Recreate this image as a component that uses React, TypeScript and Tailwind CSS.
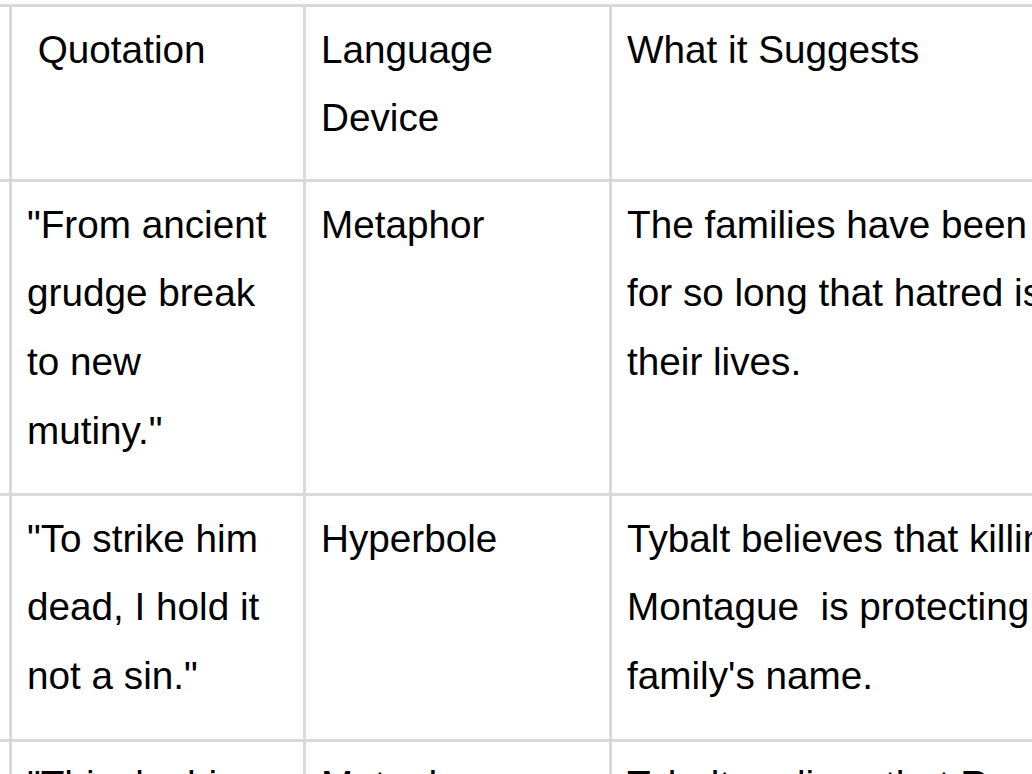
const rows: { quote: string; device: string; meaning: string[] }[] = [
  {
    quote: '"From ancient grudge break to new mutiny."',
    device: 'Metaphor',
    meaning: ['The families have been fighting', 'for so long that hatred is part of', 'their lives.'],
  },
  {
    quote: '"To strike him dead, I hold it not a sin."',
    device: 'Hyperbole',
    meaning: ['Tybalt believes that killing a', 'Montague\u00a0 is protecting his', "family's name."],
  },
  {
    quote: '"This, by his voice, should be a Montague."',
    device: 'Metaphor',
    meaning: ['Tybalt realises that Romeo is', 'at the party.'],
  },
]

function Cell({ children, className = '' }: { children?: React.ReactNode; className?: string }) {
  return <div className={`bg-white pt-[8.5px] pl-[15px] ${className}`}>{children}</div>
}

export default function App() {
  return (
    <div
      className="w-[1032px] h-[774px] overflow-hidden bg-white text-black text-[38.7px] leading-[68.8px]"
      style={{ fontFamily: '"Liberation Sans", Arial, sans-serif' }}
    >
      <div className="mt-[4px] w-max grid grid-cols-[9px_291px_303px_640px] grid-rows-[172px_311px_243px_200px] gap-[3px] pt-[3px] bg-[#d9d9d9]">
        {/* header */}
        <div className="bg-white" />
        <Cell className="whitespace-pre pr-[26px]"> Quotation</Cell>
        <Cell className="pr-[15px]">Language Device</Cell>
        <Cell className="pr-[15px]">What it Suggests</Cell>

        {rows.map((r, i) => (
          <>
            <div key={`l${i}`} className="bg-white" />
            <Cell key={`q${i}`} className="pr-[26px]">{r.quote}</Cell>
            <Cell key={`d${i}`} className="pr-[15px]">{r.device}</Cell>
            <Cell key={`m${i}`} className="whitespace-nowrap pr-[15px]">
              {r.meaning.map((line, j) => (
                <div key={j}>{line}</div>
              ))}
            </Cell>
          </>
        ))}
      </div>
    </div>
  )
}
